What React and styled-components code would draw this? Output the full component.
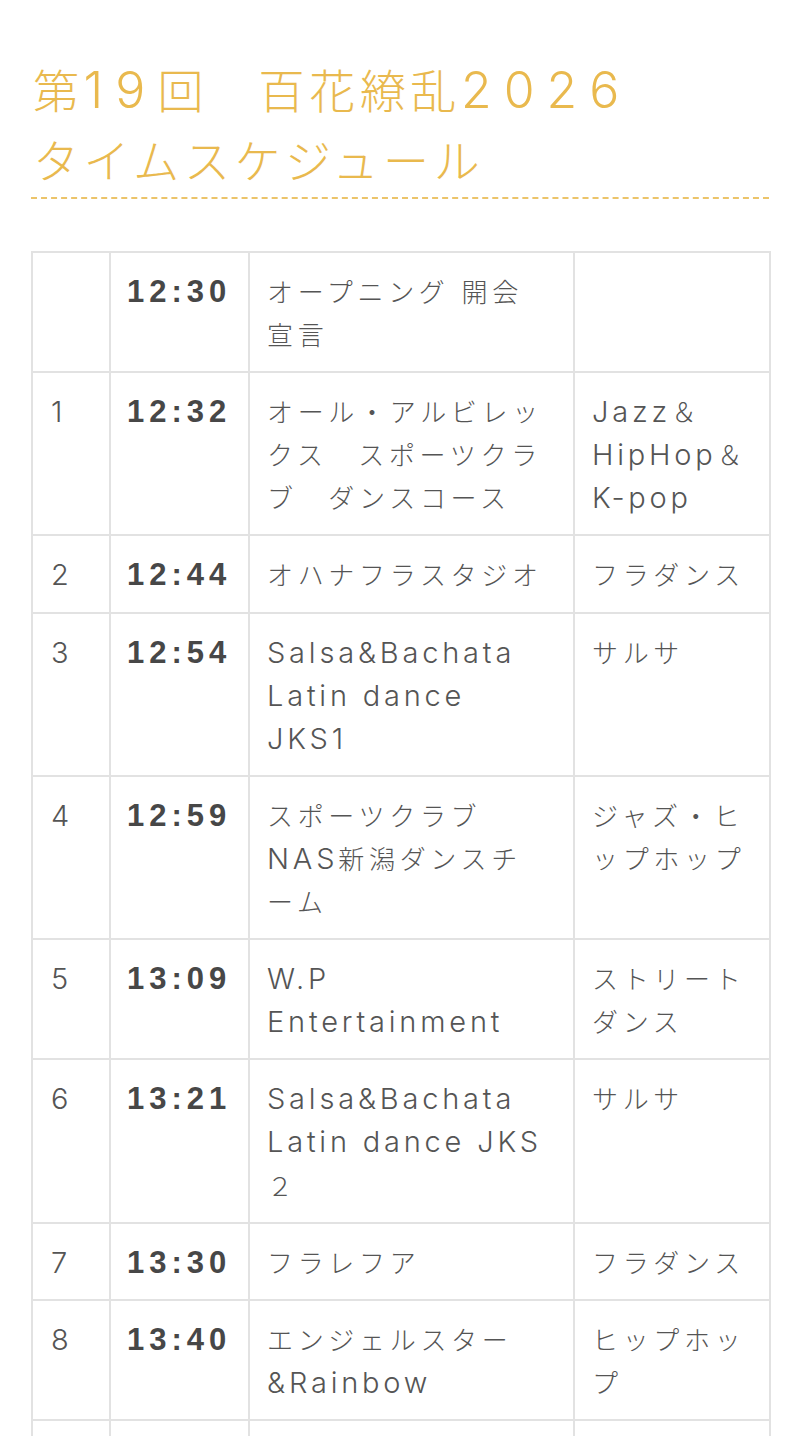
import styled, { createGlobalStyle } from "styled-components";

const GlobalStyle = createGlobalStyle`
  html, body {
    margin: 0;
    padding: 0;
    background: #fff;
  }
  body {
    font-family: "Noto Sans CJK JP", "Noto Sans", sans-serif;
    color: #555;
  }
`;

const Page = styled.main`
  padding: 53px 31px 0;
`;

const Heading = styled.h2`
  margin: 0;
  padding: 0 0 4px 2px;
  font-size: 46px;
  font-weight: 300;
  line-height: 70px;
  letter-spacing: 0.1em;
  color: #e9b94e;
  border-bottom: 2px dashed #ecc46a;
`;

// latin runs are drawn a bit larger, like the reference's mixed font
const Latin = styled.span`
  font-family: Inter, "Liberation Sans", sans-serif;
  font-weight: 300;
  font-size: ${(p) => p.$size || "29px"};
  letter-spacing: ${(p) => p.$spacing || "3.8px"};
  line-height: 1;
`;

const Table = styled.table`
  margin-top: 52px;
  width: 738px;
  border-collapse: collapse;
  table-layout: fixed;
  font-size: 26px;
  font-weight: 300;
  line-height: 43.1px;
  letter-spacing: 0.18em;
`;

const Col = styled.col`
  width: ${(p) => p.$w}px;
`;

const Cell = styled.td`
  border: 2px solid #e2e2e2;
  padding: 16px 0 16px 17px;
  vertical-align: top;
  color: #555;
  white-space: nowrap;
  height: 43px;
`;

const NoCell = styled(Cell)`
  padding-left: 18px;
`;

const TimeCell = styled(Cell)`
  padding: 17px 0 15px 16px;
  font-family: "Liberation Sans", Arial, sans-serif;
  font-weight: 700;
  font-size: 31px;
  letter-spacing: 5px;
  color: #474747;
`;

const schedule = [
  { no: "", time: "12:30", name: ["オープニング 開会", "宣言"], genre: [] },
  {
    no: "1",
    time: "12:32",
    name: ["オール・アルビレッ", "クス　スポーツクラ", "ブ　ダンスコース"],
    genre: ["Jazz＆", "HipHop＆", "K-pop"],
  },
  { no: "2", time: "12:44", name: ["オハナフラスタジオ"], genre: ["フラダンス"] },
  { no: "3", time: "12:54", name: ["Salsa&Bachata", "Latin dance", "JKS1"], genre: ["サルサ"] },
  {
    no: "4",
    time: "12:59",
    name: ["スポーツクラブ", "NAS新潟ダンスチ", "ーム"],
    genre: ["ジャズ・ヒ", "ップホップ"],
  },
  { no: "5", time: "13:09", name: ["W.P", "Entertainment"], genre: ["ストリート", "ダンス"] },
  { no: "6", time: "13:21", name: ["Salsa&Bachata", "Latin dance JKS", "２"], genre: ["サルサ"] },
  { no: "7", time: "13:30", name: ["フラレフア"], genre: ["フラダンス"] },
  { no: "8", time: "13:40", name: ["エンジェルスター", "&Rainbow"], genre: ["ヒップホッ", "プ"] },
  { no: "", time: "", name: [], genre: [] },
];

// split a string into latin / japanese runs
const Mixed = ({ text, size, spacing }) =>
  text.split(/([\x20-\x7E]+)/).map((part, i) =>
    /^[\x20-\x7E]+$/.test(part) ? (
      <Latin key={i} $size={size} $spacing={spacing}>
        {part}
      </Latin>
    ) : (
      part
    )
  );

const Lines = ({ lines }) =>
  lines.map((line, i) => (
    <span key={i}>
      {i > 0 && <br />}
      <Mixed text={line} />
    </span>
  ));

export default function App() {
  return (
    <>
      <GlobalStyle />
      <Page>
        <Heading>
          <Mixed text="第19回　百花繚乱2026" size="50px" spacing="12px" />
          <br />
          タイムスケジュール
        </Heading>
        <Table>
          <colgroup>
            <Col $w={78} />
            <Col $w={139} />
            <Col $w={325} />
            <Col $w={196} />
          </colgroup>
          <tbody>
            {schedule.map((row, i) => (
              <tr key={i}>
                <NoCell>
                  <Mixed text={row.no} />
                </NoCell>
                <TimeCell>{row.time}</TimeCell>
                <Cell>
                  <Lines lines={row.name} />
                </Cell>
                <Cell>
                  <Lines lines={row.genre} />
                </Cell>
              </tr>
            ))}
          </tbody>
        </Table>
      </Page>
    </>
  );
}
